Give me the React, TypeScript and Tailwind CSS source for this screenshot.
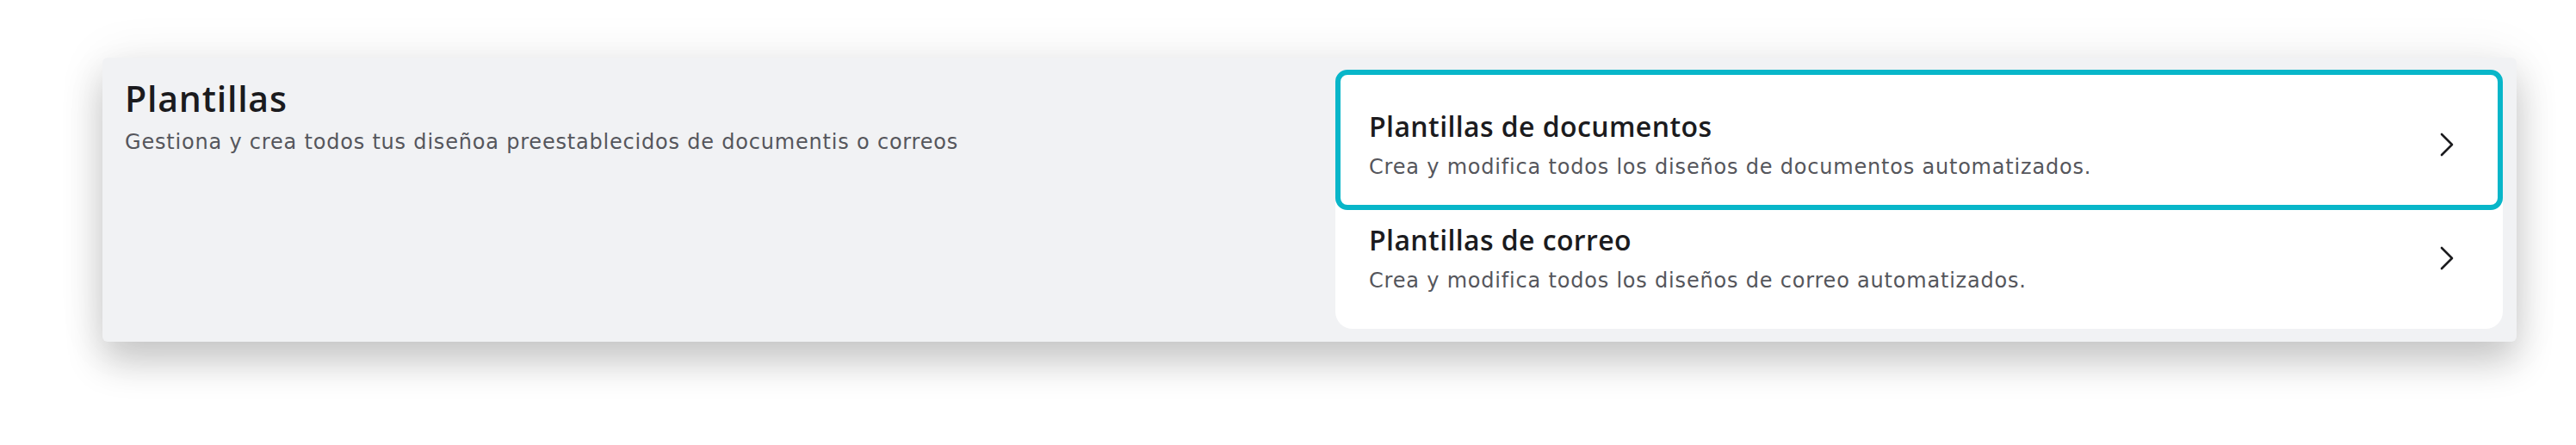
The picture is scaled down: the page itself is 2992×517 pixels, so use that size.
type Row = {
  title: string;
  text: string;
  active?: boolean;
};

const rows: Row[] = [
  {
    title: "Plantillas de documentos",
    text: "Crea y modifica todos los diseños de documentos automatizados.",
    active: true,
  },
  {
    title: "Plantillas de correo",
    text: "Crea y modifica todos los diseños de correo automatizados.",
  },
];

const Chevron = () => (
  <svg width="18" height="28" viewBox="0 0 18 28" fill="none" className="shrink-0">
    <polyline points="3,2 15,14 3,26" stroke="#1c1c1f" strokeWidth="2.6" strokeLinecap="round" strokeLinejoin="round" />
  </svg>
);

const RowContent = ({ row }: { row: Row }) => (
  <>
    <div>
      <h3 className="text-[32px] leading-[44px] tracking-[0.4px] font-semibold text-[#1b1b1e]">{row.title}</h3>
      <p className="mt-[8px] font-['DejaVu_Sans',sans-serif] text-[24px] leading-[34px] tracking-[0.8px] text-[#55565c]">
        {row.text}
      </p>
    </div>
    <div className="mt-[29px]">
      <Chevron />
    </div>
  </>
);

const App = () => {
  return (
    <div className="min-h-screen bg-white pl-[119px] pt-[67px] font-['Open_Sans',sans-serif]">
      <div className="flex w-[2804px] h-[330px] rounded-md bg-[#f1f2f4] shadow-[0_24px_44px_rgba(0,0,0,0.2),0_0_60px_rgba(0,0,0,0.07)]">
        {/* Header */}
        <div className="flex-1 pl-[26px] pt-[19px]">
          <h1 className="text-[41px] leading-[56px] tracking-[0.8px] font-semibold text-[#1b1b1e]">Plantillas</h1>
          <p className="mt-[6px] font-['DejaVu_Sans',sans-serif] text-[24px] leading-[34px] tracking-[0.8px] text-[#55565c]">
            Gestiona y crea todos tus diseñoa preestablecidos de documentis o correos
          </p>
        </div>

        {/* Options */}
        <div className="mt-[14px] mr-[16px] mb-[15px] w-[1356px] rounded-[20px] bg-white flex flex-col">
          {rows.map((row) =>
            row.active ? (
              <div
                key={row.title}
                className="h-[163px] rounded-[14px] border-[6px] border-[#08b6c9] pl-[33px] pr-[50px] pt-[38px] flex items-start justify-between"
              >
                <RowContent row={row} />
              </div>
            ) : (
              <div key={row.title} className="flex-1 pl-[39px] pr-[56px] pt-[13px] flex items-start justify-between">
                <RowContent row={row} />
              </div>
            )
          )}
        </div>
      </div>
    </div>
  );
};

export default App;
